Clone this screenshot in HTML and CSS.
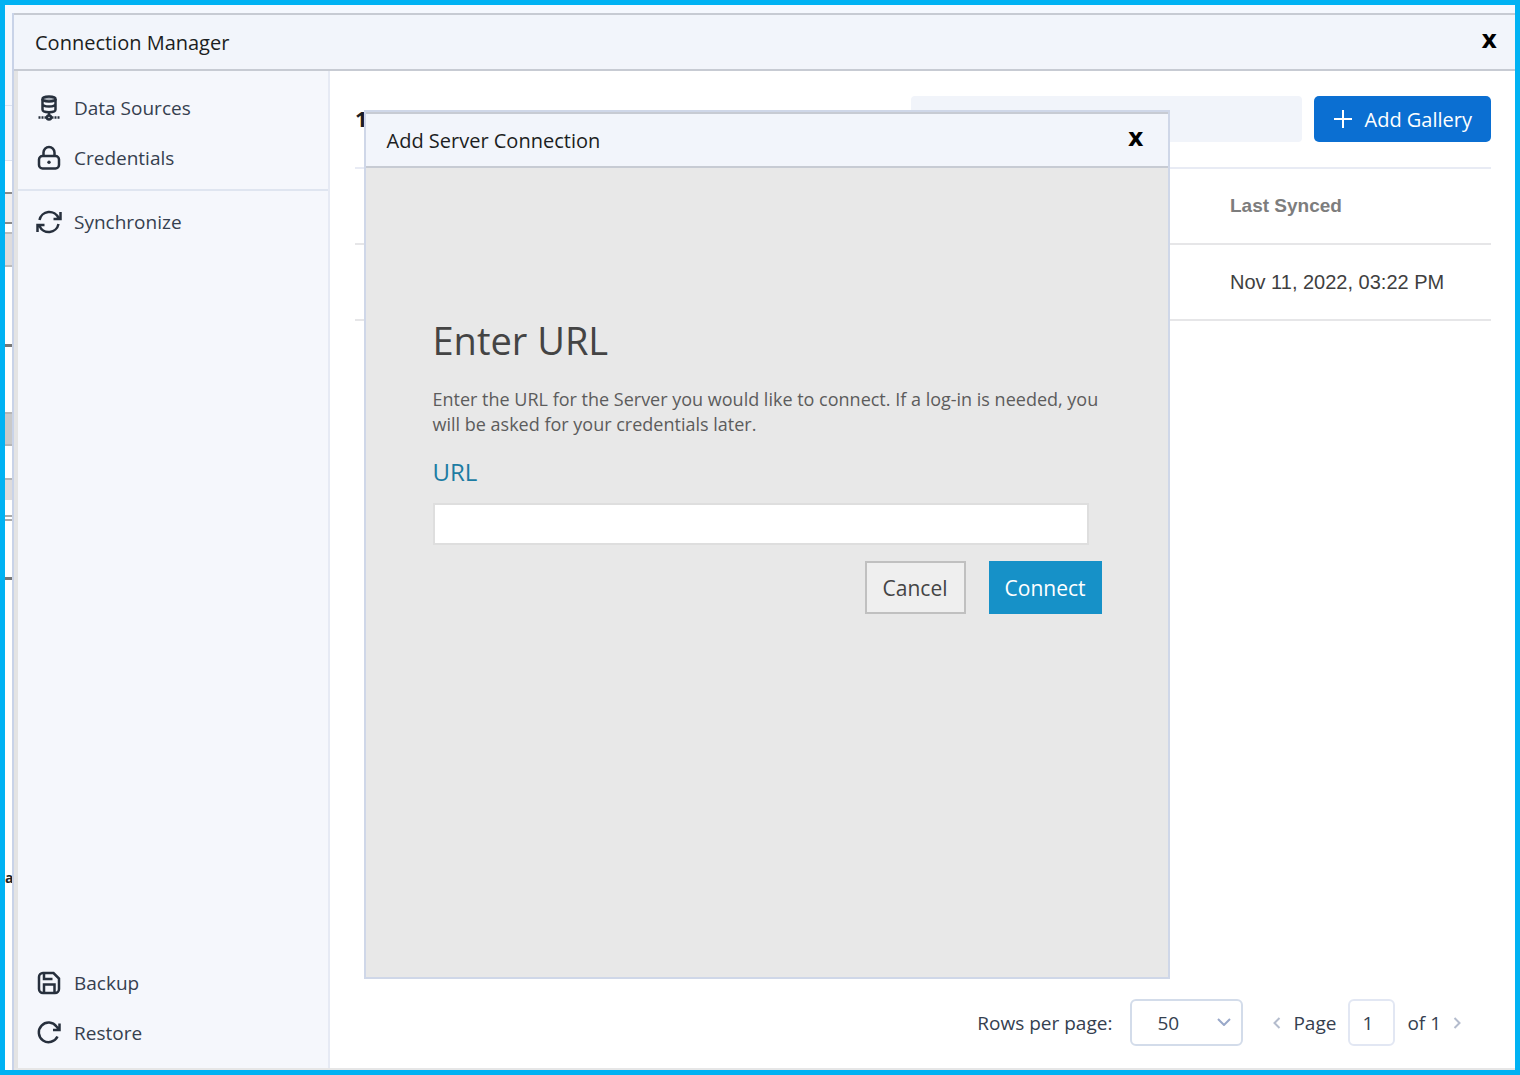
FILE: index.html
```html
<!DOCTYPE html>
<html lang="en">
<head>
  <meta charset="UTF-8" />
  <meta name="viewport" content="width=device-width, initial-scale=1.0"/>
  <title>Connection Manager</title>
  <link rel="stylesheet" href="styles.css">
</head>
<body>
  <!-- edge of the main app, behind the window -->
  <div class="backdrop">
    <div class="strip cell-a"></div>
    <div class="strip cell-b"></div>
    <div class="strip cell-c"></div>
    <div class="strip cell-d"></div>
    <div class="strip cell-e"></div>
    <div class="strip cell-f"></div>
    <div class="strip cell-g"></div>
    <div class="strip cell-h"></div>
    <div class="strip cell-i"></div>
    <div class="strip cell-j"></div>
    <div class="strip cell-k"></div>
    <div class="strip cell-l"></div>
    <div class="strip cell-m"></div>
    <div class="strip cell-text">a</div>
  </div>

  <div class="window">
    <header class="titlebar">
      <h1>Connection Manager</h1>
      <button type="button" class="close" aria-label="Close">x</button>
    </header>

    <div class="content">
      <nav class="sidebar">
        <a href="#" class="nav-item">
          <svg viewBox="0 0 26 26" class="icon">
            <path d="M6.500 4v10.500c0 1.700 3 2.700 6.500 2.700s6.500-1 6.500-2.700V4M6.500 9c0 1.500 3 2.500 6.500 2.500s6.500-1 6.500-2.500" />
            <ellipse class="disk" cx="13" cy="4" rx="6.500" ry="2.500" />
            <path d="M13 17.500v3" />
            <circle cx="13" cy="22.500" r="2" />
            <path class="dots" d="M2.500 22.500h8M15.500 22.500h8" />
          </svg>
          Data Sources
        </a>
        <a href="#" class="nav-item">
          <svg viewBox="0 0 26 26" class="icon">
            <rect x="3" y="11" width="20" height="12.500" rx="3.500" />
            <path d="M7.500 11V7.500a5.500 5.500 0 0 1 11 0V11" />
            <circle class="fill" cx="13" cy="17.200" r="1.700" />
          </svg>
          Credentials
        </a>
        <hr class="divider">
        <a href="#" class="nav-item">
          <svg viewBox="0 0 26 26" class="icon">
            <path d="M3.500 11A10 10 0 0 1 22.500 9M24.500 3v7H17.500M22.500 15A10 10 0 0 1 3.500 17M1.500 23v-7H8.500" />
          </svg>
          Synchronize
        </a>
        <div class="nav-bottom">
          <a href="#" class="nav-item">
            <svg viewBox="0 0 26 26" class="icon">
              <path d="M3 7a4 4 0 0 1 4-4h10.500L23 8.500V19a4 4 0 0 1-4 4H7a4 4 0 0 1-4-4z" />
              <path d="M8 23v-8.500h10.500V23M8 3v6h8.500" />
            </svg>
            Backup
          </a>
          <a href="#" class="nav-item">
            <svg viewBox="0 0 26 26" class="icon">
              <path d="M21.500 16.500A9.800 9.800 0 1 1 20.500 6.500L23.500 10M23.500 3.500V10H17" />
            </svg>
            Restore
          </a>
        </div>
      </nav>

      <main class="main">
        <div class="toolbar">
          <h2 class="count">1</h2>
          <input type="search" class="search" aria-label="Search">
          <button type="button" class="add-btn">
            <svg viewBox="0 0 20 20" class="plus"><path d="M10 1v18M1 10h18" /></svg>
            Add Gallery
          </button>
        </div>

        <table class="galleries">
          <thead>
            <tr><td></td><th>Last Synced</th></tr>
          </thead>
          <tbody>
            <tr><td></td><td>Nov 11, 2022, 03:22 PM</td></tr>
          </tbody>
        </table>

        <footer class="pager">
          <label for="rows">Rows per page:</label>
          <div class="select-wrap">
            <select id="rows">
              <option>50</option>
            </select>
            <svg viewBox="0 0 14 8" class="chevron"><path d="M1 1l6 6 6-6" /></svg>
          </div>
          <button type="button" class="page-btn" aria-label="Previous page">
            <svg viewBox="0 0 8 12"><path d="M6.500 1l-5 5 5 5" /></svg>
          </button>
          <label for="page">Page</label>
          <input type="text" id="page" value="1">
          <span>of 1</span>
          <button type="button" class="page-btn" aria-label="Next page">
            <svg viewBox="0 0 8 12"><path d="M1.500 1l5 5-5 5" /></svg>
          </button>
        </footer>
      </main>
    </div>

    <div class="overlay">
      <section class="dialog" role="dialog" aria-labelledby="dialogTitle">
        <header class="titlebar">
          <h1 id="dialogTitle">Add Server Connection</h1>
          <button type="button" class="close" aria-label="Close">x</button>
        </header>
        <form class="dialog-body">
          <h2>Enter URL</h2>
          <p>Enter the URL for the Server you would like to connect. If a log-in is needed, you will be asked for your credentials later.</p>
          <label for="url">URL</label>
          <input type="text" id="url">
          <div class="actions">
            <button type="button" class="cancel">Cancel</button>
            <button type="submit" class="connect">Connect</button>
          </div>
        </form>
      </section>
    </div>
  </div>
</body>
</html>
```
FILE: styles.css
```css
* {
  box-sizing: border-box;
}

body {
  margin: 0;
  height: 100vh;
  border: 5px solid #00b2f3;
  display: flex;
  overflow: hidden;
  background: #f5f8fe;
  font-family: 'Open Sans', 'Noto Sans', sans-serif;
  font-size: 19px;
  color: #35404f;
}

button, input, select {
  font-family: inherit;
  font-size: 19px;
  color: inherit;
}

h1, h2, p {
  margin: 0;
  font-weight: normal;
}

/* backdrop */
.backdrop {
  width: 7px;
  flex-shrink: 0;
  overflow: hidden;
}

.strip {
  background: #fff;
}

.cell-a { height: 101px; background: #f5f8fe; border-bottom: 1px solid #dbe2f0; }
.cell-b { height: 55px; background: #f5f8fe; border-bottom: 1px solid #dbe2f0; }
.cell-c { height: 33px; border-bottom: 2px solid #8a8a8a; }
.cell-d { height: 30px; background: #f0eeef; border-bottom: 2px solid #8a8a8a; }
.cell-e { height: 8px; }
.cell-f { height: 35px; background: #dedcdd; border-top: 2px solid #bbb; border-bottom: 2px solid #bbb; }
.cell-g { height: 80px; border-bottom: 3px solid #777; }
.cell-h { height: 65px; }
.cell-i { height: 34px; background: #c9c9c9; border-top: 2px solid #b5b5b5; border-bottom: 2px solid #b5b5b5; }
.cell-j { height: 32px; }
.cell-k { height: 22px; background: #dedcdd; border-top: 2px solid #b5b5b5; }
.cell-l { height: 21px; border-bottom: 6px double #aaa; }
.cell-m { height: 59px; border-bottom: 3px solid #777; }

.cell-text {
  height: 100%;
  padding-top: 288px;
  font-size: 14px;
  font-weight: bold;
  line-height: 20px;
  color: #222;
}

/* window */
.window {
  position: relative;
  flex: 1;
  margin-top: 8px;
  border-left: 2px solid #c9d3e8;
  display: flex;
  flex-direction: column;
  background: #fff;
}

.titlebar {
  height: 58px;
  flex-shrink: 0;
  padding: 0 18px 0 21px;
  border: 2px solid #c7cbd3;
  border-width: 2px 0;
  display: flex;
  justify-content: space-between;
  align-items: center;
  background: #f2f5fb;
  color: #1c1e22;
}

.titlebar h1 {
  font-size: 20px;
}

.close {
  padding: 0 0 4px;
  border: none;
  background: none;
  font-family: 'DejaVu Sans', sans-serif;
  font-size: 24px;
  font-weight: bold;
  line-height: 24px;
  color: #000;
  cursor: pointer;
}

.content {
  flex: 1;
  display: flex;
  border-bottom: 2px solid #e6e6e6;
}

/* sidebar */
.sidebar {
  width: 316px;
  flex-shrink: 0;
  padding-top: 12px;
  padding-bottom: 10px;
  border-left: 4px solid #e4e4e4;
  border-right: 2px solid #e6eaf4;
  display: flex;
  flex-direction: column;
  background: #f5f7fc;
}

.nav-item {
  height: 50px;
  padding-left: 18px;
  display: flex;
  align-items: center;
  gap: 12px;
  color: #35404f;
  text-decoration: none;
}

.icon {
  width: 26px;
  height: 26px;
  fill: none;
  stroke: #27303d;
  stroke-width: 2.5;
}

.icon .dots {
  stroke-dasharray: 2 1;
}

.icon .disk {
  fill: #a9afb8;
}

.icon .fill {
  fill: #27303d;
  stroke: none;
}

.divider {
  width: 100%;
  margin: 6px 0;
  border: none;
  border-top: 2px solid #dfe5f0;
}

.nav-bottom {
  margin-top: auto;
}

/* main area */
.main {
  flex: 1;
  padding: 25px 24px 22px 25px;
  display: flex;
  flex-direction: column;
}

.toolbar {
  display: flex;
  align-items: center;
}

.count {
  padding-bottom: 2px;
  font-size: 22px;
  font-weight: bold;
  color: #1c1e22;
  margin-right: auto;
}

.search {
  width: 391px;
  height: 46px;
  border: none;
  border-radius: 4px;
  background: #f1f4fa;
}

.add-btn {
  height: 46px;
  margin-left: 12px;
  padding: 0 19px;
  border: none;
  border-radius: 5px;
  display: flex;
  align-items: center;
  gap: 12px;
  background: #0b6fd2;
  color: #fff;
  font-size: 20px;
}

.plus {
  width: 20px;
  height: 20px;
  stroke: #fff;
  stroke-width: 2;
}

.galleries {
  margin-top: 25px;
  border-collapse: collapse;
  border-top: 2px solid #e8ebf4;
  font-family: 'Liberation Sans', sans-serif;
  font-size: 20px;
  color: #3f3f3f;
}

.galleries tr {
  height: 76px;
  border-bottom: 2px solid #e6e6e8;
}

.galleries th, .galleries td {
  padding: 0;
  text-align: left;
}

.galleries th {
  font-size: 19px;
  color: #7d7d7d;
}

.galleries th:last-child, .galleries td:last-child {
  width: 261px;
}

.pager {
  margin-top: auto;
  padding-right: 30px;
  display: flex;
  justify-content: flex-end;
  align-items: center;
}

.select-wrap {
  position: relative;
  margin: 0 30px 0 18px;
}

.pager select {
  display: block;
  width: 113px;
  height: 47px;
  padding-left: 25px;
  border: 2px solid #d3dcea;
  border-radius: 6px;
  appearance: none;
  background: #fff;
}

.chevron {
  position: absolute;
  right: 12px;
  top: 19px;
  width: 14px;
  height: 8px;
  fill: none;
  stroke: #99a8c9;
  stroke-width: 2;
}

.page-btn {
  padding: 0;
  border: none;
  background: none;
}

.page-btn svg {
  display: block;
  width: 8px;
  height: 12px;
  fill: none;
  stroke: #b4bccd;
  stroke-width: 2;
}

.pager label[for="page"] {
  margin-left: 12px;
}

.pager input {
  width: 47px;
  height: 47px;
  margin: 0 12px;
  padding: 0 8px 0 0;
  border: 2px solid #e2e7f3;
  border-radius: 6px;
  text-align: center;
}

.pager span {
  margin-right: 12px;
}

/* dialog */
.overlay {
  position: absolute;
  inset: 0;
  padding: 6px 0 0 4px;
  display: flex;
  justify-content: center;
  align-items: center;
}

.dialog {
  width: 806px;
  height: 869px;
  border: 2px solid #cfd7e8;
  display: flex;
  flex-direction: column;
  background: #e8e8e8;
}

.dialog .titlebar {
  height: 56px;
  padding-right: 24px;
}

.dialog-body {
  padding: 144px 66px 0 67px;
  display: flex;
  flex-direction: column;
}

.dialog-body h2 {
  font-size: 38px;
  line-height: 56px;
  color: #444;
}

.dialog-body p {
  margin-top: 19px;
  font-size: 18px;
  line-height: 25px;
  color: #5c5c5c;
}

.dialog-body label {
  margin-top: 18px;
  font-size: 24px;
  line-height: 34px;
  color: #1c7ca3;
}

.dialog-body input {
  height: 42px;
  margin-top: 14px;
  margin-right: 13px;
  padding: 0 10px;
  border: 2px solid #dedede;
  background: #fff;
}

.actions {
  margin-top: 16px;
  display: flex;
  justify-content: flex-end;
  gap: 23px;
}

.actions button {
  height: 53px;
  padding: 0 16px;
  font-size: 21px;
}

.cancel {
  border: 2px solid #c0c0c0;
  background: #efefef;
  color: #444;
}

.connect {
  border: none;
  background: #1691c8;
  color: #fff;
}
```
